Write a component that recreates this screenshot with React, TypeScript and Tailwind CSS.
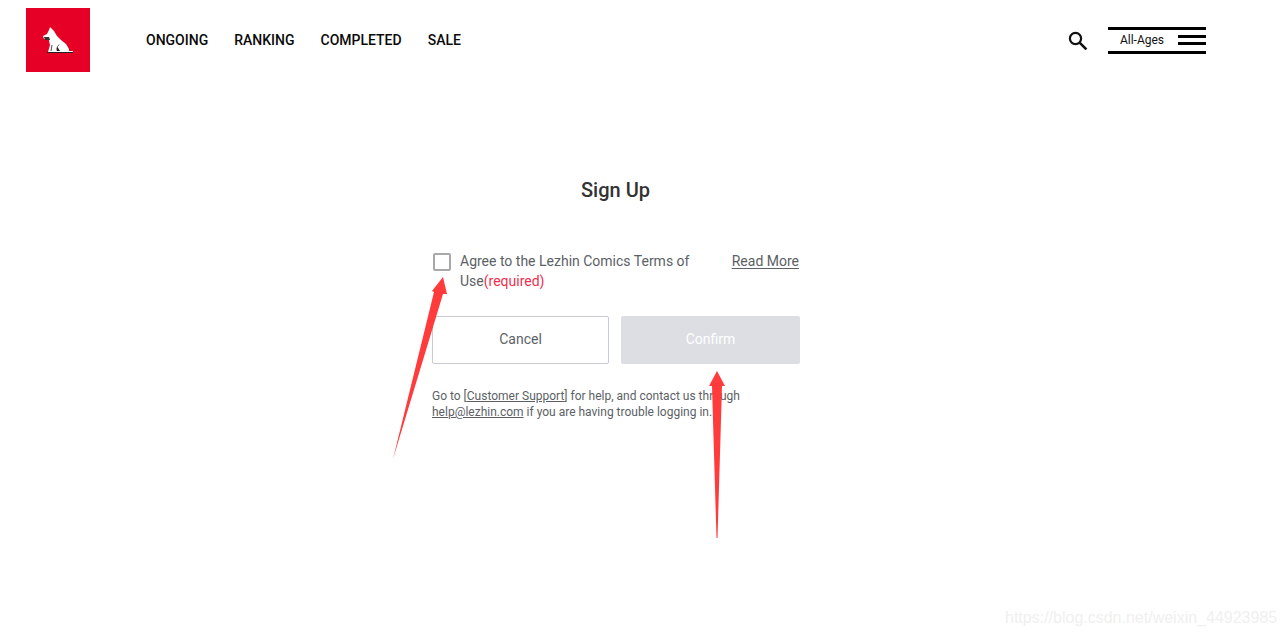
import React from "react";

const NAV_ITEMS = ["ONGOING", "RANKING", "COMPLETED", "SALE"];

function DogLogo() {
  return (
    <svg width="32" height="28" viewBox="0 0 32 28">
      <path
        d="M8 1 L12 5 L15 10 L19 14 L24 18 L27 23 L27 25 L31 25 L31 26 L6 26 L8 19 L7 15 L7 13 L2 13 L1 10 L5 8 L7 4 Z"
        fill="#fff"
      />
      <path d="M2 11 L7 11 L8 14 L3 14 Z" fill="#333" />
      <path d="M18 18 C14.5 20 14 23 15 25 L18 25 L15.5 21" fill="#222" />
      <path d="M10 19 L9 25" stroke="#222" strokeWidth="0.8" />
      <path d="M5 26.5 L31 26.5" stroke="#222" strokeWidth="1" />
    </svg>
  );
}

function SearchIcon() {
  return (
    <svg width="20" height="20" viewBox="0 0 20 20" fill="none" stroke="#111" strokeWidth="2.2">
      <circle cx="7.5" cy="7.5" r="5.6" />
      <path d="M11.6 11.6 L18.4 18.4" strokeWidth="2.6" />
    </svg>
  );
}

function Header() {
  return (
    <header className="flex h-20 items-start">
      <a className="mt-2 ml-[26px] flex h-16 w-16 items-center justify-center bg-[#e60026]">
        <DogLogo />
      </a>
      <nav className="mt-[31px] ml-14 flex gap-[26px] text-sm leading-[18px] font-medium text-[#0a0a0a]">
        {NAV_ITEMS.map((item) => (
          <a key={item}>{item}</a>
        ))}
      </nav>
      <div className="mt-[27px] ml-[607px] flex items-center gap-5">
        <SearchIcon />
        <button className="flex h-[27px] w-[98px] items-center justify-between border-y-[3px] border-black pr-0 pb-px pl-3 text-xs text-[#111]">
          All-Ages
          <span className="flex w-7 flex-col gap-1">
            <span className="h-[3px] bg-black" />
            <span className="h-[3px] bg-black" />
          </span>
        </button>
      </div>
    </header>
  );
}

function SignUpForm() {
  return (
    <main className="mt-[100px] ml-[432px] w-[368px] text-[#5c5f66]">
      <h1 className="pr-[1px] text-center text-xl leading-5 font-medium text-[#333]">Sign Up</h1>
      <div className="mt-[51px] flex items-start text-sm leading-5">
        <span className="mt-[2px] ml-[1px] h-[18px] w-[18px] shrink-0 rounded-[2px] border-2 border-[#a8a8a8]" />
        <p className="ml-[9px] w-[240px]">
          Agree to the Lezhin Comics Terms of Use<span className="text-[#ee2f4e]">(required)</span>
        </p>
        <a className="mr-px ml-auto underline underline-offset-2">Read More</a>
      </div>
      <div className="mt-[25px] flex justify-between text-sm">
        <button className="h-12 w-[177px] rounded-[2px] border border-[#c8cad6] bg-white pb-[2px]">Cancel</button>
        <button className="h-12 w-[179px] rounded-[2px] bg-[#dcdee3] pb-[2px] text-white">Confirm</button>
      </div>
      <p className="mt-6 text-xs leading-4">
        Go to [<a className="underline">Customer Support</a>] for help, and contact us through
        <br />
        <a className="underline">help@lezhin.com</a> if you are having trouble logging in.
      </p>
    </main>
  );
}

export default function App() {
  return (
    <div className="relative h-[636px] w-[1286px] overflow-hidden bg-white font-['Roboto',sans-serif]">
      <Header />
      <SignUpForm />
      {/* red annotation arrows drawn on top of the screenshot */}
      <svg className="absolute top-0 left-0" width="1286" height="636">
        <path d="M393 459 L434 292 L432 291 L443 277 L447 294 L443 294 Z" fill="#ff3b3b" />
        <path d="M716.5 538 L717.5 538 L722 386 L725 386 L717 371 L709 386 L712 386 Z" fill="#ff3b3b" />
      </svg>
      <span className="absolute top-[608px] left-[1005px] font-['Liberation_Sans',sans-serif] text-base leading-5 text-[#f0f0f0]">
        https://blog.csdn.net/weixin_44923985
      </span>
    </div>
  );
}
